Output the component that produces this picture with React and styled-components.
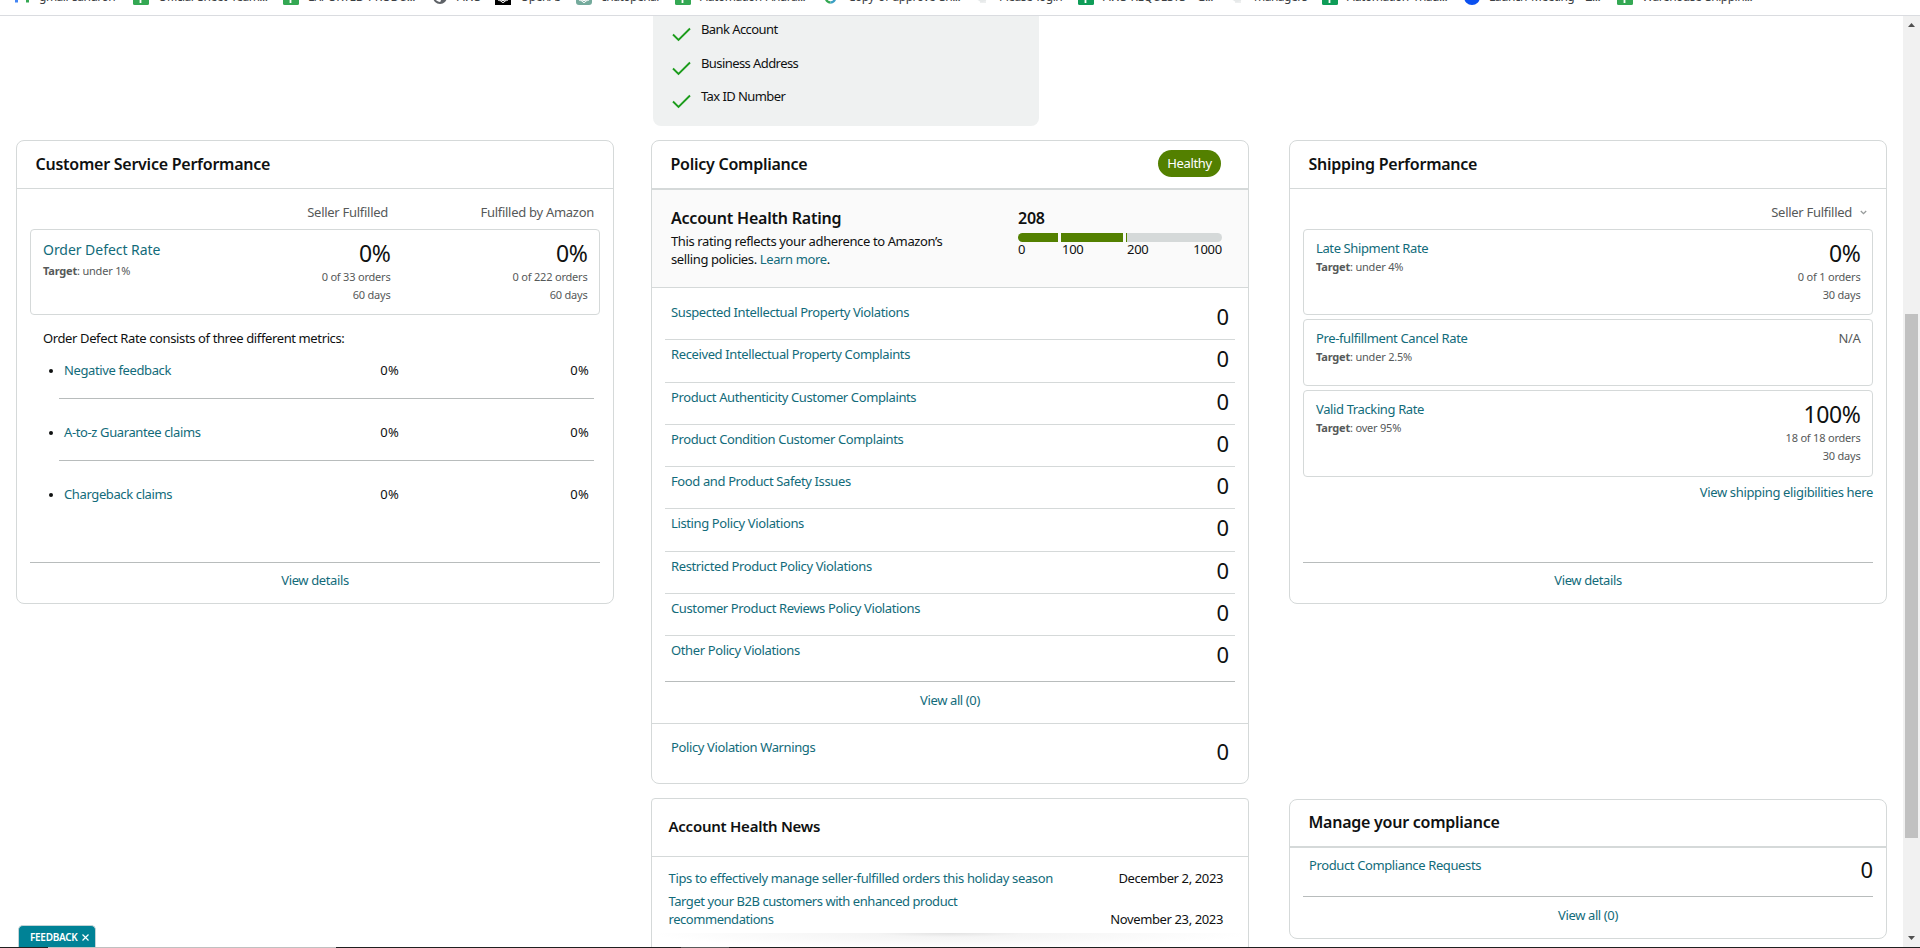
import styled, { createGlobalStyle, css } from "styled-components";

const GlobalStyles = createGlobalStyle`
  :root {
    --color-link: #126b7a;
    --color-text: #0f1111;
    --color-muted: #565959;
    --color-green: #538000;
    --color-line: #d5d9d9;
    --color-line-dark: #b8bcbc;
  }

  *, *::before, *::after {
    box-sizing: border-box;
    margin: 0;
    padding: 0;
  }

  body {
    background: #fff;
    color: var(--color-text);
    font-family: "Noto Sans", "Open Sans", sans-serif;
    font-size: 13px;
    line-height: 18px;
    letter-spacing: -0.38px;
    overflow: hidden;
  }
`;

const Screen = styled.div`
  position: relative;
  display: flex;
  flex-direction: column;
  width: 1920px;
  height: 948px;
  overflow: hidden;
`;

/* Bookmarks */

const BookmarksBar = styled.nav`
  display: flex;
  flex: none;
  height: 16px;
  padding-left: 14px;
  border-bottom: 1px solid #dadce0;
  overflow: hidden;
`;

const Bookmark = styled.span`
  display: flex;
  flex: none;
  gap: 9px;
  width: ${(props) => props.$width}px;
  height: 16px;
  margin-top: -11px;
  color: #3c4043;
  font-size: 12px;
  line-height: 16px;
  letter-spacing: -0.5px;
  word-spacing: 1.4px;
  white-space: nowrap;

  & svg {
    flex: none;
  }
`;

/* Page */

const Viewport = styled.div`
  display: flex;
  flex: none;
  height: 931px;
  overflow: hidden;
`;

const Content = styled.main`
  width: 1903px;
`;

const ScrollTrack = styled.div`
  display: flex;
  flex-direction: column;
  align-items: center;
  width: 17px;
  padding: 7px 0 7px;
  background: #f1f1f1;
`;

const ScrollThumb = styled.div`
  width: 13px;
  height: 524px;
  margin: 287px 0 auto;
  background: #c1c1c1;
`;

const BottomStrip = styled.div`
  flex: none;
  height: 1px;
  background: linear-gradient(
    to right,
    #202020 48px,
    #c0c0c0 48px 336px,
    #202020 336px 681px,
    #5a5a5a 681px 729px,
    #202020 729px
  );
`;

const VerifiedPanel = styled.ul`
  width: 386px;
  height: 110px;
  margin-left: 653px;
  padding: 4px 19px 0;
  border-radius: 0 0 8px 8px;
  background: #eff1f1;
  letter-spacing: -0.58px;
  list-style: none;
`;

const VerifiedItem = styled.li`
  display: flex;
  gap: 10px;
  height: 33.6px;

  & svg {
    margin-top: 7px;
  }
`;

const Columns = styled.div`
  display: flex;
  align-items: flex-start;
  margin-top: 14px;
  padding-left: 16px;
`;

const Column = styled.div`
  flex: none;
  width: 598px;
  margin-left: ${(props) => props.$offset || 0}px;
`;

/* Cards */

const Card = styled.section`
  display: flex;
  flex-direction: column;
  height: ${(props) => props.$height}px;
  margin-top: ${(props) => props.$mt || 0}px;
  border: 1px solid var(--color-line);
  border-radius: ${(props) => props.$radius || 8}px;
`;

const CardHeader = styled.header`
  display: flex;
  flex: none;
  align-items: flex-start;
  justify-content: space-between;
  padding: 9px 27px 10px 18.5px;
  border-bottom: ${(props) => (props.$thick ? 2 : 1)}px solid var(--color-line);

  ${(props) =>
    props.$compact &&
    css`
      padding-top: 8px;
    `}
`;

const CardTitle = styled.h2`
  font-size: 16px;
  font-weight: 600;
  line-height: 28px;
  letter-spacing: -0.25px;
`;

const CardBody = styled.div`
  display: flex;
  flex: 1;
  flex-direction: column;
  padding: ${(props) => props.$top || 0}px 13px 0;
`;

const CardFooter = styled.footer`
  flex: none;
  margin-top: auto;
  padding: ${(props) => props.$top || 9}px 0 14px;
  border-top: 1px solid var(--color-line-dark);
  text-align: center;
`;

const Link = styled.a`
  color: var(--color-link);
`;

/* Metrics */

const FulfillmentHeads = styled.div`
  display: flex;
  justify-content: flex-end;
  height: 26px;
  padding-right: 6px;
  color: var(--color-muted);
  letter-spacing: -0.28px;

  & span {
    width: 206px;
    text-align: right;
  }
`;

const FulfillmentSelect = styled.div`
  display: flex;
  align-items: flex-start;
  justify-content: flex-end;
  gap: 8px;
  height: 26px;
  padding-right: 6px;
  color: var(--color-muted);
  letter-spacing: -0.28px;

  & svg {
    margin-top: 7px;
  }
`;

const MetricBox = styled.div`
  display: flex;
  flex: none;
  height: ${(props) => props.$height || 86}px;
  margin-bottom: 4px;
  padding: 0 11.5px 0 12px;
  border: 1px solid var(--color-line);
  border-radius: 4px;
`;

const Target = styled.p`
  margin-top: 2px;
  color: var(--color-muted);
  font-size: 11px;
  line-height: 15px;
  letter-spacing: -0.2px;
`;

const MetricLabel = styled.div`
  flex: 1;
  padding-top: 9px;

  ${(props) =>
    props.$large &&
    css`
      & ${Link} {
        display: block;
        margin: 1px 0;
        font-size: 14px;
        line-height: 19px;
        letter-spacing: -0.04px;
      }

      & ${Target} {
        margin-top: 4px;
      }
    `}
`;

const MetricValue = styled.div`
  width: 197px;
  padding-top: 8px;
  color: var(--color-muted);
  font-size: 11px;
  letter-spacing: -0.2px;
  text-align: right;

  & strong {
    display: block;
    color: var(--color-text);
    font-size: 23px;
    font-weight: 400;
    line-height: 30px;
    letter-spacing: -0.4px;
  }
`;

const NotAvailable = styled.p`
  padding-top: 9px;
  color: var(--color-muted);
`;

const Intro = styled.p`
  margin: 10px 0 14px 13px;
`;

const DefectList = styled.ul`
  margin: 0 6px 0 29px;
  list-style: none;
`;

const DefectItem = styled.li`
  display: flex;
  align-items: center;
  padding: 24px 5px 19px;
  border-bottom: 1px solid var(--color-line-dark);

  &::before {
    content: "";
    width: 4px;
    height: 4px;
    margin: 2px 11px 0 -15px;
    border-radius: 50%;
    background: var(--color-text);
  }

  &:first-child {
    padding-top: 0;
  }

  &:last-child {
    border-bottom: none;
  }

  & ${Link} {
    flex: 1;
  }

  & span {
    width: 190px;
    letter-spacing: 0.3px;
    text-align: right;
  }
`;

const EligibilityLink = styled(Link)`
  margin-top: 2px;
  letter-spacing: -0.35px;
  text-align: right;
`;

/* Policy compliance */

const Pill = styled.span`
  width: 63px;
  height: 27px;
  border-radius: 14px;
  background: var(--color-green);
  color: #fff;
  line-height: 27px;
  text-align: center;
`;

const Rating = styled.div`
  display: flex;
  flex: none;
  justify-content: space-between;
  height: 98px;
  padding: 16px 26px 0 19px;
  border-bottom: 1px solid var(--color-line);
  background: #fafafa;
`;

const RatingTitle = styled.h3`
  margin-bottom: 2px;
  font-size: 16px;
  font-weight: 600;
  line-height: 24px;
  letter-spacing: -0.22px;
`;

const RatingText = styled.p`
  width: 290px;
`;

const Score = styled.div`
  width: 204px;
`;

const ScoreBar = styled.div`
  display: flex;
  gap: 3px;
  height: 9px;
  margin-top: 3px;
  border-radius: 5px;
  overflow: hidden;
`;

const ScoreSegment = styled.div`
  width: ${(props) => props.$width}px;
  background: var(--color-green);
`;

const ScoreRest = styled.div`
  flex: 1;
  border-left: 1px solid var(--color-green);
  background: var(--color-line);
`;

const ScoreScale = styled.div`
  display: grid;
  grid-template-columns: 44px 65px 1fr auto;
  line-height: 14px;
  letter-spacing: -0.25px;
`;

const PolicyRow = styled.div`
  display: flex;
  flex: none;
  justify-content: space-between;
  height: 42.28px;
  padding: 5px 6px 0;
  border-bottom: 1px solid var(--color-line);

  ${(props) =>
    props.$last &&
    css`
      height: 44px;
      border-bottom: none;
    `}

  ${(props) =>
    props.$flush &&
    css`
      padding-right: 0;
    `}
`;

const Count = styled.span`
  margin-top: -2px;
  font-size: 22px;
  line-height: 30px;
  letter-spacing: 0;
`;

const Warnings = styled.div`
  height: 60px;
  padding: 9px 13px 0;
  border-top: 1px solid var(--color-line);
`;

/* News */

const NewsHeader = styled.header`
  flex: none;
  height: 58px;
  padding: 15px 17px 0 16.5px;
  border-bottom: 1px solid var(--color-line);
`;

const NewsTitle = styled(CardTitle)`
  font-size: 15px;
  line-height: 24px;
`;

const NewsList = styled.ul`
  display: flex;
  flex-direction: column;
  gap: 5px;
  padding: 12px 25px 5px 16.5px;
  list-style: none;
`;

const NewsItem = styled.li`
  display: flex;
  align-items: flex-end;
  justify-content: space-between;

  & ${Link} {
    max-width: 388px;
    letter-spacing: ${(props) => (props.$long ? -0.45 : -0.35)}px;
  }
`;

const NewsShade = styled.div`
  flex: none;
  height: 16px;
  background: radial-gradient(
    ellipse 50% 100% at 50% 0,
    #e2e2e2 0,
    #f4f4f4 25%,
    #fff 100%
  );
`;

const FeedbackTab = styled.button`
  position: absolute;
  left: 18px;
  bottom: 1px;
  display: flex;
  align-items: center;
  gap: 5px;
  width: 78px;
  height: 22px;
  padding: 1px 0 0 11px;
  border: 1px solid #c3d3d6;
  border-bottom: none;
  border-radius: 5px 5px 0 0;
  background: #008296;
  color: #fff;
  font-family: inherit;
  font-size: 10px;
  font-weight: 600;
  letter-spacing: -0.3px;
`;

/* Icons */

function SheetIcon({ color = "#34a853" }) {
  return (
    <svg width="16" height="16" viewBox="0 0 16 16">
      <rect width="16" height="16" rx="1.5" fill={color} />
      <path d="M3 8h10M7.500 3v11" stroke="#fff" strokeWidth="1.8" />
    </svg>
  );
}

function MailIcon() {
  return (
    <svg width="16" height="16" viewBox="0 0 16 16">
      <path d="M1 4h3v9.500H1z" fill="#4285f4" />
      <path d="M12 4h3v9.500h-3z" fill="#34a853" />
      <path d="M1 4l7 5 7-5" stroke="#ea4335" strokeWidth="2" fill="none" />
    </svg>
  );
}

function GlobeIcon({ color = "#5f6368" }) {
  return (
    <svg width="16" height="16" viewBox="0 0 16 16">
      <circle cx="8" cy="8" r="6" fill="#fff" stroke={color} strokeWidth="2" />
      <path d="M8 8h5v3l-3 3H8l1-3z" fill={color} />
    </svg>
  );
}

function KnotIcon({ color, radius }) {
  return (
    <svg width="16" height="16" viewBox="0 0 16 16">
      <rect width="16" height="16" rx={radius} fill={color} />
      <g fill="none" stroke="#fff" strokeWidth="1">
        <ellipse cx="8" cy="8" rx="3" ry="5.500" />
        <ellipse cx="8" cy="8" rx="3" ry="5.500" transform="rotate(60 8 8)" />
        <ellipse cx="8" cy="8" rx="3" ry="5.500" transform="rotate(120 8 8)" />
      </g>
    </svg>
  );
}

function RingIcon() {
  return (
    <svg width="16" height="16" viewBox="0 0 16 16">
      <path d="M3 9a4.500 4.500 0 0 0 4.500 4.500" stroke="#34a853" strokeWidth="2.600" fill="none" />
      <path d="M7.500 13.500a4.500 4.500 0 0 0 4.500-4.500" stroke="#3b9fc4" strokeWidth="2.600" fill="none" />
    </svg>
  );
}

function FadedIcon() {
  return (
    <svg width="16" height="16" viewBox="0 0 16 16">
      <circle cx="8" cy="7" r="6" fill="#f1f3f3" />
      <path d="M5 11h7M6 13h6" stroke="#dcdfe0" />
    </svg>
  );
}

function MeetingIcon() {
  return (
    <svg width="16" height="16" viewBox="0 0 16 16">
      <circle cx="8" cy="8" r="8" fill="#0b50f0" />
      <rect x="4" y="5.500" width="8" height="5" rx="1" fill="#fff" />
    </svg>
  );
}

function CheckIcon() {
  return (
    <svg width="19" height="15" viewBox="0 0 19 15">
      <path d="M1 7.500l5.500 5.500L18 1.500" fill="none" stroke="#1c9c1c" strokeWidth="1.900" />
    </svg>
  );
}

function ChevronIcon() {
  return (
    <svg width="7" height="6" viewBox="0 0 7 6">
      <path d="M0.800 1l2.700 2.700L6.200 1" fill="none" stroke="#979b9b" strokeWidth="1.300" />
    </svg>
  );
}

function CloseIcon() {
  return (
    <svg width="7" height="7" viewBox="0 0 7 7">
      <path d="M0.500 0.500l6 6M6.500 0.500l-6 6" stroke="#fff" strokeWidth="1.200" />
    </svg>
  );
}

function ArrowIcon({ down }) {
  return (
    <svg width="7" height="4" viewBox="0 0 7 4">
      <path d={down ? "M0 0h7L3.500 4z" : "M0 4h7L3.500 0z"} fill="#505050" />
    </svg>
  );
}

/* Data */

const bookmarks = [
  { label: "gmail sandron", width: 119, icon: <MailIcon /> },
  { label: "Official Sheet Team...", width: 150, icon: <SheetIcon /> },
  { label: "EXPORTED PRODU...", width: 149, icon: <SheetIcon /> },
  { label: "AWS", width: 63, icon: <GlobeIcon /> },
  { label: "OpenAI", width: 81, icon: <KnotIcon color="#000" radius="0" /> },
  { label: "chatopenai", width: 99, icon: <KnotIcon color="#74aa9c" radius="3" /> },
  { label: "Automation Andra...", width: 148, icon: <SheetIcon /> },
  { label: "Copy of approve Sh...", width: 151, icon: <RingIcon /> },
  { label: "Please login", width: 104, icon: <FadedIcon /> },
  { label: "AWS REQUESTS - G...", width: 151, icon: <SheetIcon color="#0f9d58" /> },
  { label: "managers", width: 93, icon: <FadedIcon /> },
  { label: "Automation Thad...", width: 142, icon: <SheetIcon color="#0f9d58" /> },
  { label: "Launch Meeting - Z...", width: 153, icon: <MeetingIcon /> },
  { label: "Warehouse Shippin...", width: 150, icon: <SheetIcon /> },
];

const verified = ["Bank Account", "Business Address", "Tax ID Number"];

const defects = ["Negative feedback", "A-to-z Guarantee claims", "Chargeback claims"];

const policies = [
  "Suspected Intellectual Property Violations",
  "Received Intellectual Property Complaints",
  "Product Authenticity Customer Complaints",
  "Product Condition Customer Complaints",
  "Food and Product Safety Issues",
  "Listing Policy Violations",
  "Restricted Product Policy Violations",
  "Customer Product Reviews Policy Violations",
  "Other Policy Violations",
];

const shipping = [
  {
    name: "Late Shipment Rate",
    target: "under 4%",
    value: "0%",
    orders: "0 of 1 orders",
    height: 86,
  },
  { name: "Pre-fulfillment Cancel Rate", target: "under 2.5%", height: 67 },
  {
    name: "Valid Tracking Rate",
    target: "over 95%",
    value: "100%",
    orders: "18 of 18 orders",
    height: 87,
  },
];

const news = [
  {
    title: "Tips to effectively manage seller-fulfilled orders this holiday season",
    date: "December 2, 2023",
  },
  {
    title: "Target your B2B customers with enhanced product recommendations",
    date: "November 23, 2023",
    long: true,
  },
];

function Metric({ value, orders, days }) {
  return (
    <MetricValue>
      <strong>{value}</strong>
      <p>{orders}</p>
      <p>{days}</p>
    </MetricValue>
  );
}

function CustomerService() {
  return (
    <Card $height={464}>
      <CardHeader>
        <CardTitle>Customer Service Performance</CardTitle>
      </CardHeader>
      <CardBody $top={14}>
        <FulfillmentHeads>
          <span>Seller Fulfilled</span>
          <span>Fulfilled by Amazon</span>
        </FulfillmentHeads>
        <MetricBox>
          <MetricLabel $large>
            <Link>Order Defect Rate</Link>
            <Target>
              <b>Target</b>: under 1%
            </Target>
          </MetricLabel>
          <Metric value="0%" orders="0 of 33 orders" days="60 days" />
          <Metric value="0%" orders="0 of 222 orders" days="60 days" />
        </MetricBox>
        <Intro>Order Defect Rate consists of three different metrics:</Intro>
        <DefectList>
          {defects.map((name) => (
            <DefectItem key={name}>
              <Link>{name}</Link>
              <span>0%</span>
              <span>0%</span>
            </DefectItem>
          ))}
        </DefectList>
        <CardFooter $top={8}>
          <Link>View details</Link>
        </CardFooter>
      </CardBody>
    </Card>
  );
}

function PolicyCompliance() {
  return (
    <Card $height={644}>
      <CardHeader $thick>
        <CardTitle>Policy Compliance</CardTitle>
        <Pill>Healthy</Pill>
      </CardHeader>
      <Rating>
        <div>
          <RatingTitle>Account Health Rating</RatingTitle>
          <RatingText>
            This rating reflects your adherence to Amazon’s selling policies.{" "}
            <Link>Learn more</Link>.
          </RatingText>
        </div>
        <Score>
          <RatingTitle as="p">208</RatingTitle>
          <ScoreBar>
            <ScoreSegment $width={40} />
            <ScoreSegment $width={62} />
            <ScoreRest />
          </ScoreBar>
          <ScoreScale>
            <span>0</span>
            <span>100</span>
            <span>200</span>
            <span>1000</span>
          </ScoreScale>
        </Score>
      </Rating>
      <CardBody $top={10}>
        {policies.map((name, i) => (
          <PolicyRow key={name} $last={i === policies.length - 1}>
            <Link>{name}</Link>
            <Count>0</Count>
          </PolicyRow>
        ))}
        <CardFooter>
          <Link>View all (0)</Link>
        </CardFooter>
      </CardBody>
      <Warnings>
        <PolicyRow $last>
          <Link>Policy Violation Warnings</Link>
          <Count>0</Count>
        </PolicyRow>
      </Warnings>
    </Card>
  );
}

function HealthNews() {
  return (
    <Card $height={240} $mt={14} $radius={4}>
      <NewsHeader>
        <NewsTitle>Account Health News</NewsTitle>
      </NewsHeader>
      <NewsList>
        {news.map(({ title, date, long }) => (
          <NewsItem key={title} $long={long}>
            <Link>{title}</Link>
            <time>{date}</time>
          </NewsItem>
        ))}
      </NewsList>
      <NewsShade />
    </Card>
  );
}

function ShippingPerformance() {
  return (
    <Card $height={464}>
      <CardHeader>
        <CardTitle>Shipping Performance</CardTitle>
      </CardHeader>
      <CardBody $top={14}>
        <FulfillmentSelect>
          <span>Seller Fulfilled</span>
          <ChevronIcon />
        </FulfillmentSelect>
        {shipping.map(({ name, target, value, orders, height }) => (
          <MetricBox key={name} $height={height}>
            <MetricLabel>
              <Link>{name}</Link>
              <Target>
                <b>Target</b>: {target}
              </Target>
            </MetricLabel>
            {value ? (
              <Metric value={value} orders={orders} days="30 days" />
            ) : (
              <NotAvailable>N/A</NotAvailable>
            )}
          </MetricBox>
        ))}
        <EligibilityLink>View shipping eligibilities here</EligibilityLink>
        <CardFooter $top={8}>
          <Link>View details</Link>
        </CardFooter>
      </CardBody>
    </Card>
  );
}

function ManageCompliance() {
  return (
    <Card $height={140} $mt={195}>
      <CardHeader $thick $compact>
        <CardTitle>Manage your compliance</CardTitle>
      </CardHeader>
      <CardBody $top={3}>
        <PolicyRow $last $flush>
          <Link>Product Compliance Requests</Link>
          <Count>0</Count>
        </PolicyRow>
        <CardFooter>
          <Link>View all (0)</Link>
        </CardFooter>
      </CardBody>
    </Card>
  );
}

function App() {
  return (
    <>
      <GlobalStyles />
      <Screen>
        <BookmarksBar>
          {bookmarks.map(({ label, width, icon }) => (
            <Bookmark key={label} $width={width}>
              {icon}
              {label}
            </Bookmark>
          ))}
        </BookmarksBar>

        <Viewport>
          <Content>
            <VerifiedPanel>
              {verified.map((label) => (
                <VerifiedItem key={label}>
                  <CheckIcon />
                  {label}
                </VerifiedItem>
              ))}
            </VerifiedPanel>

            <Columns>
              <Column>
                <CustomerService />
              </Column>
              <Column $offset={37}>
                <PolicyCompliance />
                <HealthNews />
              </Column>
              <Column $offset={40}>
                <ShippingPerformance />
                <ManageCompliance />
              </Column>
            </Columns>
          </Content>

          <ScrollTrack>
            <ArrowIcon />
            <ScrollThumb />
            <ArrowIcon down />
          </ScrollTrack>
        </Viewport>
        <BottomStrip />

        <FeedbackTab>
          FEEDBACK
          <CloseIcon />
        </FeedbackTab>
      </Screen>
    </>
  );
}

export default App;
